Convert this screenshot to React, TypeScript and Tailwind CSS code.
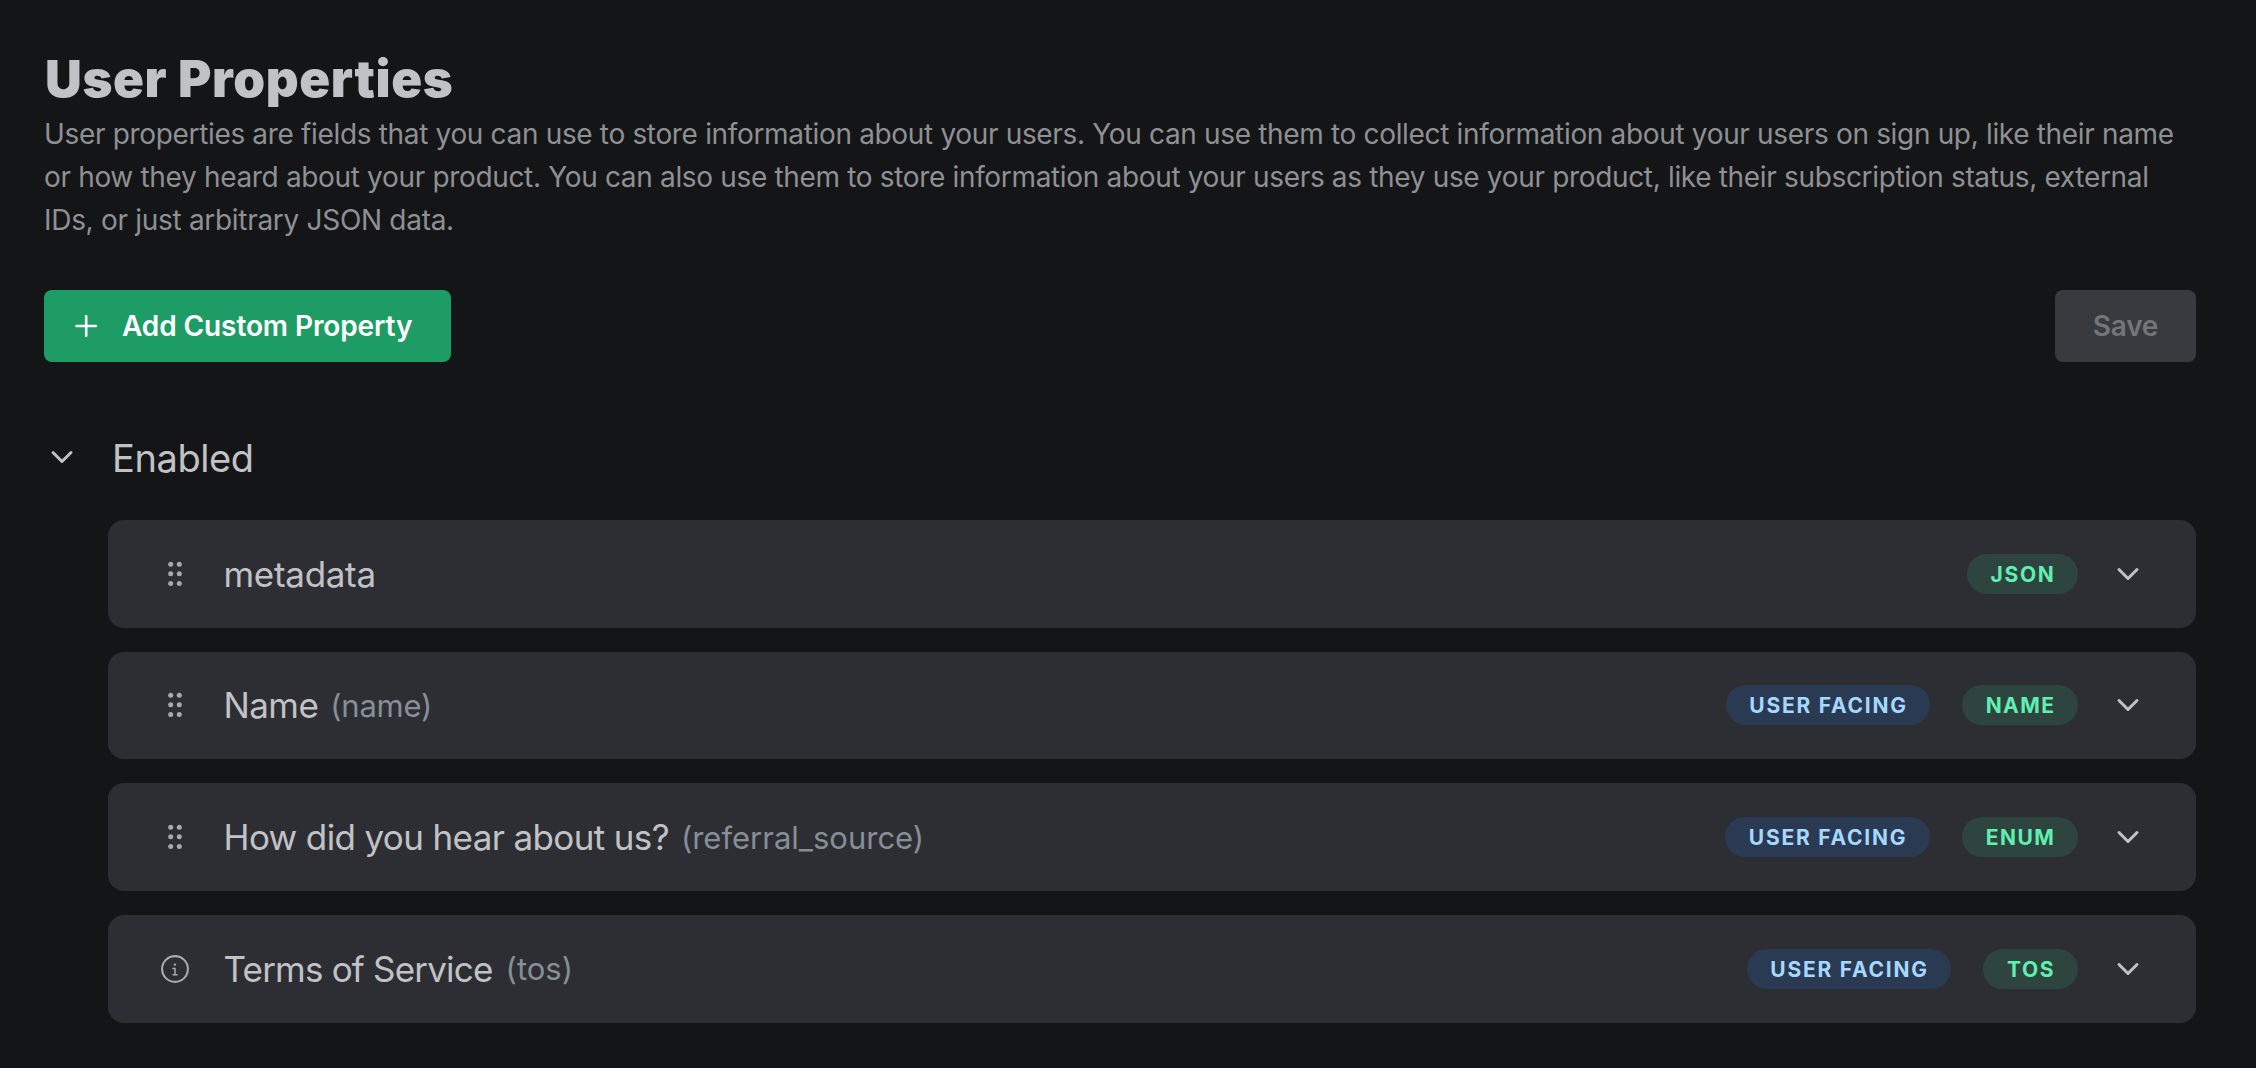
import React from "react";

type Tag = { label: string; className: string };

type Property = {
  title: string;
  titleClass: string;
  slug?: string;
  slugClass?: string;
  locked?: boolean;
  userFacing?: string;
  tag: Tag;
};

const properties: Property[] = [
  {
    title: "metadata",
    titleClass: "tracking-[-0.3px]",
    tag: { label: "JSON", className: "w-[111px] tracking-[1.7px]" },
  },
  {
    title: "Name",
    titleClass: "tracking-[-0.6px]",
    slug: "(name)",
    slugClass: "tracking-[-0.2px]",
    userFacing: "w-[204px]",
    tag: { label: "NAME", className: "w-[116px] tracking-[1.4px]" },
  },
  {
    title: "How did you hear about us?",
    titleClass: "tracking-[-0.63px]",
    slug: "(referral_source)",
    slugClass: "tracking-[0px]",
    userFacing: "w-[205px]",
    tag: { label: "ENUM", className: "w-[116px] tracking-[1.4px]" },
  },
  {
    title: "Terms of Service",
    titleClass: "tracking-[-0.8px]",
    slug: "(tos)",
    slugClass: "ml-[13px] tracking-[0px]",
    locked: true,
    userFacing: "w-[204px]",
    tag: { label: "TOS", className: "w-[95px] tracking-[1.6px]" },
  },
];

function Chevron() {
  return (
    <svg viewBox="0 0 36 36" className="size-9 shrink-0" fill="none" stroke="currentColor" strokeWidth="3" strokeLinecap="round" strokeLinejoin="round">
      <path d="M9 13.5 18 22.5 27 13.5" />
    </svg>
  );
}

function Grip() {
  return (
    <svg viewBox="0 0 32 32" className="size-8 shrink-0" fill="currentColor">
      {[6.2, 15.8, 25.4].map((y) => (
        <React.Fragment key={y}>
          <circle cx="11.7" cy={y} r="2.5" />
          <circle cx="20.3" cy={y} r="2.5" />
        </React.Fragment>
      ))}
    </svg>
  );
}

function Info() {
  return (
    <svg viewBox="0 0 32 32" className="size-8 shrink-0" fill="none" stroke="currentColor">
      <circle cx="16" cy="16" r="12.9" strokeWidth="2.1" />
      <circle cx="15.9" cy="11.6" r="1.2" fill="currentColor" stroke="none" />
      <path d="M13.4 15.4H16V21.6M13.5 21.8H18.6" strokeWidth="1.5" />
    </svg>
  );
}

function Badge({ label, className }: Tag) {
  return (
    <span className={"flex h-10 items-center justify-center rounded-full pt-px pl-px text-[21px] leading-none font-bold " + className}>
      {label}
    </span>
  );
}

function PropertyRow({ item }: { item: Property }) {
  return (
    <li className="flex h-[107.65px] items-center rounded-2xl bg-[#2d2e33] pr-[50px] pl-[51px]">
      <span className="text-[#a9aaad]">{item.locked ? <Info /> : <Grip />}</span>
      <span className={"ml-[32.5px] pt-px text-[35px] leading-none " + item.titleClass}>{item.title}</span>
      {item.slug && (
        <span className={"ml-3 text-[31px] leading-none text-[#868e96] " + item.slugClass}>{item.slug}</span>
      )}
      <div className="ml-auto flex items-center">
        {item.userFacing && (
          <Badge label="USER FACING" className={"mr-8 bg-[#2a3a52] tracking-[1.75px] text-[#a5d8ff] " + item.userFacing} />
        )}
        <Badge label={item.tag.label} className={"bg-[#2d453e] text-[#60efb1] " + item.tag.className} />
        <button className="ml-8">
          <Chevron />
        </button>
      </div>
    </li>
  );
}

export default function App() {
  return (
    <main className="h-[1068px] bg-[#141517] pt-[49px] pr-[60px] pl-[44px] font-['Inter','Liberation_Sans',sans-serif] text-[#c1c2c5]">
      <h1 className="pl-px text-[51px] leading-[60px] font-black tracking-[0.6px] whitespace-nowrap">User Properties</h1>
      <p className="mt-1 text-[28px] leading-[43px] tracking-[-0.335px] whitespace-nowrap text-[#8f9093]">
        User properties are fields that you can use to store information about your users. You can use them to collect information about your users on sign up, like their name
        <br />
        or how they heard about your product. You can also use them to store information about your users as they use your product, like their subscription status, external
        <br />
        <span className="tracking-[-0.3px]">IDs, or just arbitrary JSON data.</span>
      </p>

      <div className="mt-12 flex justify-between text-[28px] font-semibold">
        <button className="flex h-[72px] w-[407px] items-center rounded-lg bg-[#1d9d65] pl-[26px] tracking-[-0.1px] whitespace-nowrap text-white">
          <svg viewBox="0 0 32 32" className="size-8" fill="none" stroke="currentColor" strokeWidth="2.6" strokeLinecap="round">
            <path d="M16.2 6.3V25.7M6.5 16H25.9" />
          </svg>
          <span className="ml-5">Add Custom Property</span>
        </button>
        <button className="h-[72px] w-[141px] rounded-lg bg-[#393a3f] tracking-[-0.25px] text-[#747577]">Save</button>
      </div>

      <div className="mt-[68px] flex h-14 items-center">
        <button className="-mt-0.5">
          <Chevron />
        </button>
        <h2 className="ml-8 text-[38px] leading-14 tracking-[-0.4px]">Enabled</h2>
      </div>

      <ul className="mt-[34px] ml-16 flex flex-col gap-6">
        {properties.map((item) => (
          <PropertyRow key={item.title} item={item} />
        ))}
      </ul>
    </main>
  );
}
